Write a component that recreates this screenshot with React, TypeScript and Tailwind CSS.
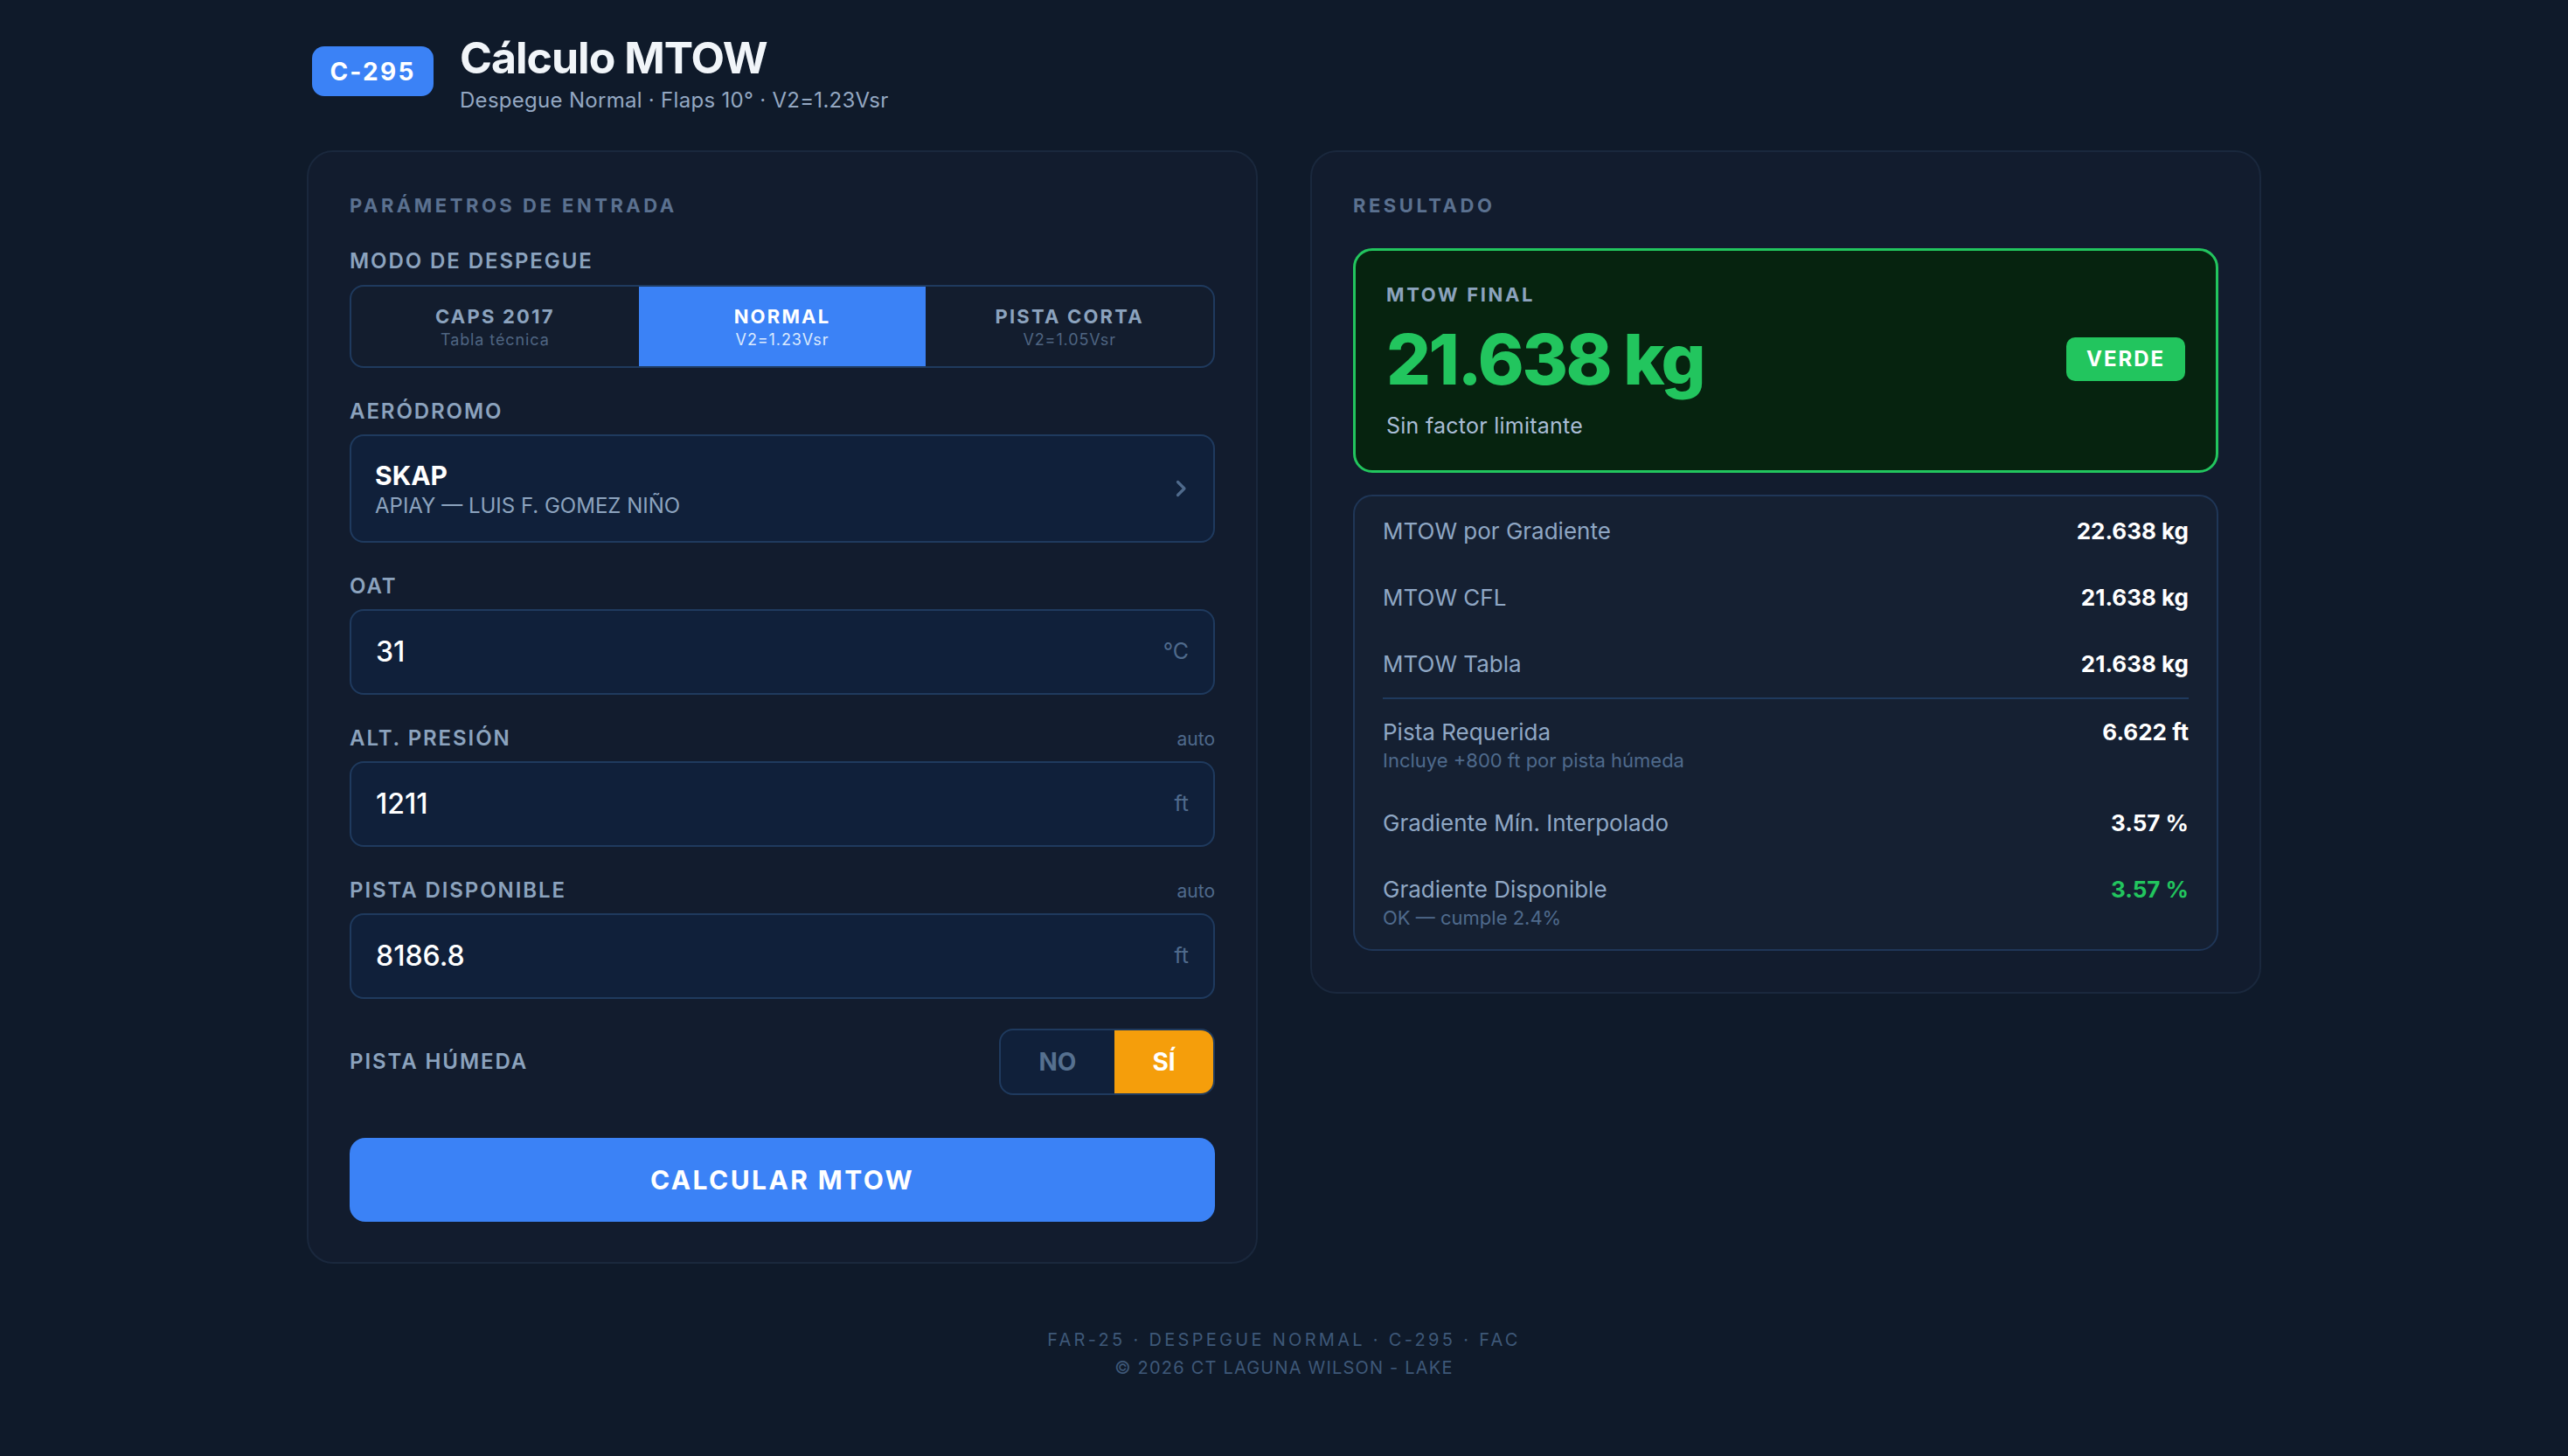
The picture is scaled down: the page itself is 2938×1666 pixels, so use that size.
const modes = [
  { id: 'caps', title: 'CAPS 2017', sub: 'Tabla técnica' },
  { id: 'normal', title: 'NORMAL', sub: 'V2=1.23Vsr' },
  { id: 'corta', title: 'PISTA CORTA', sub: 'V2=1.05Vsr' },
];

const activeMode = 'normal';

function FieldLabel({ children, hint }: { children: React.ReactNode; hint?: string }) {
  return (
    <div className="flex items-end justify-between">
      <span className="text-[24px] leading-[30px] font-semibold tracking-[0.08em] text-[#8ca3be]">{children}</span>
      {hint && <span className="text-[21px] leading-[28px] text-[#4f6a8c]">{hint}</span>}
    </div>
  );
}

function NumberField({ label, value, unit, hint }: { label: string; value: string; unit: string; hint?: string }) {
  return (
    <div className="flex flex-col gap-[11px]">
      <FieldLabel hint={hint}>{label}</FieldLabel>
      <div className="flex h-[98px] items-center justify-between rounded-[16px] border-2 border-[#1f3a5e] bg-[#10203a] pl-[28px] pr-[28px]">
        <span className="text-[32px] font-medium text-white">{value}</span>
        <span className="text-[25px] text-[#4f6a8c]">{unit}</span>
      </div>
    </div>
  );
}

type Row = { label: string; value: string; note?: string; green?: boolean; divider?: boolean };

const rows: Row[] = [
  { label: 'MTOW por Gradiente', value: '22.638 kg' },
  { label: 'MTOW CFL', value: '21.638 kg' },
  { label: 'MTOW Tabla', value: '21.638 kg', divider: true },
  { label: 'Pista Requerida', value: '6.622 ft', note: 'Incluye +800 ft por pista húmeda' },
  { label: 'Gradiente Mín. Interpolado', value: '3.57 %' },
  { label: 'Gradiente Disponible', value: '3.57 %', note: 'OK — cumple 2.4%', green: true },
];

export default function App() {
  return (
    <div className="min-h-screen bg-[#0f1a2a] font-['Inter','Noto_Sans',sans-serif] text-white">
      <div className="mx-auto w-[2236px] pt-[41px]">
        {/* Header */}
        <header className="flex items-start gap-[30px] px-[6px]">
          <div className="mt-[12px] flex h-[57px] w-[139px] items-center justify-center rounded-[14px] bg-[#3b82f6] text-[28px] font-bold tracking-[0.08em] text-white">
            C-295
          </div>
          <div className="flex flex-col gap-[8px]">
            <h1 className="text-[50px] leading-[50px] font-bold tracking-[-0.02em] text-[#f1f5f9]">Cálculo MTOW</h1>
            <p className="text-[24px] leading-[32px] tracking-[0.012em] text-[#94a8c2]">Despegue Normal · Flaps 10° · V2=1.23Vsr</p>
          </div>
        </header>

        <main className="mt-[41px] flex items-start gap-[60px]">
          {/* Inputs */}
          <section className="flex w-[1088px] flex-col rounded-[30px] border-2 border-[#1a283d] bg-[#121c2e] px-[47px] pt-[47px] pb-[46px]">
            <h2 className="text-[22px] leading-[28px] font-bold tracking-[0.16em] text-[#5b7190]">PARÁMETROS DE ENTRADA</h2>

            <div className="mt-[35px] flex flex-col gap-[35px]">
              <div className="flex flex-col gap-[12px]">
                <FieldLabel>MODO DE DESPEGUE</FieldLabel>
                <div className="grid h-[95px] grid-cols-3 overflow-hidden rounded-[16px] border-2 border-[#1f3a5e] bg-[#131d2e]">
                  {modes.map(m => {
                    const on = m.id === activeMode;
                    return (
                      <button
                        key={m.id}
                        type="button"
                        className={
                          on
                            ? 'flex flex-col items-center justify-center gap-[2px] bg-[#3b82f6]'
                            : 'flex flex-col items-center justify-center gap-[2px]'
                        }
                      >
                        <span className={on ? 'text-[22px] leading-[28px] font-bold tracking-[0.1em] text-white' : 'text-[22px] leading-[28px] font-bold tracking-[0.1em] text-[#8ca3be]'}>
                          {m.title}
                        </span>
                        <span className={on ? 'text-[18px] leading-[22px] tracking-[0.05em] text-[#dbeafe]' : 'text-[18px] leading-[22px] tracking-[0.05em] text-[#4f6582]'}>
                          {m.sub}
                        </span>
                      </button>
                    );
                  })}
                </div>
              </div>

              <div className="flex flex-col gap-[11px]">
                <FieldLabel>AERÓDROMO</FieldLabel>
                <div className="flex h-[124px] items-center justify-between rounded-[16px] border-2 border-[#1f3a5e] bg-[#10203a] pl-[27px] pr-[30px]">
                  <div className="flex flex-col">
                    <span className="text-[30px] leading-[40px] font-bold text-white">SKAP</span>
                    <span className="text-[24px] leading-[30px] text-[#8ca3be]">APIAY — LUIS F. GOMEZ NIÑO</span>
                  </div>
                  <svg viewBox="0 0 13 20" className="h-[20px] w-[13px]" fill="none" aria-hidden="true">
                    <path d="M2.5 2.5 L10 10 L2.5 17.5" stroke="#4f6a8c" strokeWidth="3.2" strokeLinecap="round" strokeLinejoin="round" />
                  </svg>
                </div>
              </div>

              <NumberField label="OAT" value="31" unit="°C" />
              <NumberField label="ALT. PRESIÓN" value="1211" unit="ft" hint="auto" />
              <NumberField label="PISTA DISPONIBLE" value="8186.8" unit="ft" hint="auto" />

              <div className="-mt-[1px] flex items-center justify-between">
                <span className="text-[24px] leading-[30px] font-semibold tracking-[0.08em] text-[#8ca3be]">PISTA HÚMEDA</span>
                <div className="flex h-[76px] overflow-hidden rounded-[16px] border-2 border-[#1f3a5e] bg-[#10203a]">
                  <button type="button" className="flex w-[130px] items-center justify-center text-[28px] font-bold text-[#56708f]">
                    NO
                  </button>
                  <button type="button" className="flex w-[113px] items-center justify-center bg-[#f59e0b] text-[28px] font-bold text-white">
                    SÍ
                  </button>
                </div>
              </div>
            </div>

            <button
              type="button"
              className="mt-[49px] flex h-[96px] items-center justify-center rounded-[18px] bg-[#3b82f6] text-[30px] font-bold tracking-[0.08em] text-white"
            >
              CALCULAR MTOW
            </button>
          </section>

          {/* Result */}
          <section className="flex w-[1088px] flex-col rounded-[30px] border-2 border-[#1a283d] bg-[#121c2e] p-[47px]">
            <h2 className="text-[22px] leading-[28px] font-bold tracking-[0.16em] text-[#5b7190]">RESULTADO</h2>

            <div className="mt-[35px] rounded-[22px] border-[3px] border-[#22c55e] bg-[#06230f] px-[35px] pt-[36px] pb-[35px]">
              <div className="text-[22px] leading-[28px] font-bold tracking-[0.12em] text-[#8ca3be]">MTOW FINAL</div>
              <div className="mt-[20px] flex items-center justify-between">
                <span className="text-[80px] leading-[80px] font-extrabold tracking-[-0.03em] text-[#22c55e]">21.638 kg</span>
                <span className="flex h-[50px] w-[136px] items-center justify-center rounded-[10px] bg-[#22c55e] text-[24px] font-bold tracking-[0.08em] text-white">
                  VERDE
                </span>
              </div>
              <div className="mt-[20px] text-[25px] leading-[32px] tracking-[0.01em] text-[#a9bdd6]">Sin factor limitante</div>
            </div>

            <div className="mt-[25px] rounded-[22px] border-2 border-[#1f3657] bg-[#152032] px-[32px] py-[2px]">
              {rows.map(r => (
                <div key={r.label} className={r.divider ? 'flex items-start justify-between border-b-2 border-[#1f3a5e] py-[20px]' : 'flex items-start justify-between py-[20px]'}>
                  <div className="flex flex-col">
                    <span className="text-[26px] leading-[36px] text-[#8fa7c4]">{r.label}</span>
                    {r.note && <span className="text-[22px] leading-[28px] text-[#4f6a8c]">{r.note}</span>}
                  </div>
                  <span className={r.green ? 'text-[26px] leading-[36px] font-bold text-[#22c55e]' : 'text-[26px] leading-[36px] font-bold text-white'}>
                    {r.value}
                  </span>
                </div>
              ))}
            </div>
          </section>
        </main>

        <footer className="mt-[71px] flex flex-col items-center pb-[60px]">
          <span className="text-[20px] leading-[32px] tracking-[0.165em] text-[#3e5878]">FAR-25 · DESPEGUE NORMAL · C-295 · FAC</span>
          <span className="text-[20px] leading-[32px] tracking-[0.06em] text-[#3e5878]">© 2026 CT LAGUNA WILSON - LAKE</span>
        </footer>
      </div>
    </div>
  );
}
